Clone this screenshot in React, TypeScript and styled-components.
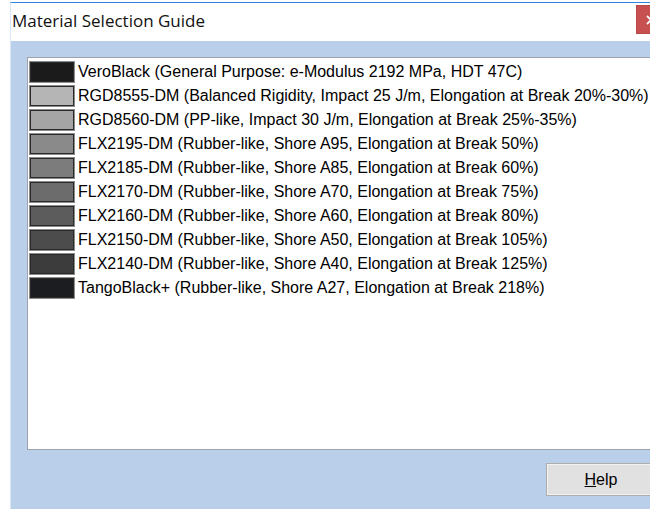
import React from "react";
import styled, { createGlobalStyle } from "styled-components";

interface Material {
    id: string;
    color: string;
    label: string;
}

const materials: Material[] = [
    { id: "vero", color: "#1b1b1b", label: "VeroBlack (General Purpose: e-Modulus 2192 MPa, HDT 47C)" },
    { id: "rgd8555", color: "#b5b5b5", label: "RGD8555-DM (Balanced Rigidity, Impact 25 J/m, Elongation at Break 20%-30%)" },
    { id: "rgd8560", color: "#a5a5a5", label: "RGD8560-DM (PP-like, Impact 30 J/m, Elongation at Break 25%-35%)" },
    { id: "flx2195", color: "#8a8a8a", label: "FLX2195-DM (Rubber-like, Shore A95, Elongation at Break 50%)" },
    { id: "flx2185", color: "#7c7c7c", label: "FLX2185-DM (Rubber-like, Shore A85, Elongation at Break 60%)" },
    { id: "flx2170", color: "#6c6c6c", label: "FLX2170-DM (Rubber-like, Shore A70, Elongation at Break 75%)" },
    { id: "flx2160", color: "#5c5c5c", label: "FLX2160-DM (Rubber-like, Shore A60, Elongation at Break 80%)" },
    { id: "flx2150", color: "#4c4c4c", label: "FLX2150-DM (Rubber-like, Shore A50, Elongation at Break 105%)" },
    { id: "flx2140", color: "#3c3c3c", label: "FLX2140-DM (Rubber-like, Shore A40, Elongation at Break 125%)" },
    { id: "tango", color: "#1c1d21", label: "TangoBlack+ (Rubber-like, Shore A27, Elongation at Break 218%)" },
];

const GlobalStyle = createGlobalStyle`
  html, body {
    margin: 0;
    padding: 0;
    background: #ffffff;
    overflow: hidden;
  }
`;

const App: React.FC = () => {
    return (
        <>
            <GlobalStyle />
            <Page>
                <Window>
                    <TitleBar>
                        <Title>Material Selection Guide</Title>
                        <CloseButton>
                            <svg width="10" height="10" viewBox="0 0 10 10">
                                <path d="M1 1 L9 9 M9 1 L1 9" stroke="#ffffff" strokeWidth="1.8" />
                            </svg>
                        </CloseButton>
                    </TitleBar>

                    <DialogBody>
                        <ListBox>
                            {materials.map((m) => (
                                <ListRow key={m.id}>
                                    <Swatch $color={m.color} />
                                    <RowLabel>{m.label}</RowLabel>
                                </ListRow>
                            ))}
                        </ListBox>

                        <ButtonRow>
                            <DialogButton>
                                <u>H</u>elp
                            </DialogButton>
                        </ButtonRow>
                    </DialogBody>
                </Window>
            </Page>
        </>
    );
};

export default App;

const Page = styled.div`
  height: 509px;
  padding: 2px 0 0 10px;
  box-sizing: border-box;
  overflow: hidden;
  background: #ffffff;
`;

const Window = styled.div`
  display: flex;
  flex-direction: column;
  width: 662px;
  height: 540px;
  box-sizing: border-box;
  border-top: 1px solid #2f84dc;
  border-left: 1px solid #d8e6f5;
`;

const TitleBar = styled.div`
  display: flex;
  flex-direction: row;
  align-items: flex-start;
  justify-content: space-between;
  height: 38px;
  background: #ffffff;
`;

const Title = styled.div`
  margin-top: 6px;
  padding-left: 1px;
  font-family: "Open Sans", "Noto Sans", sans-serif;
  font-size: 17px;
  color: #111111;
`;

const CloseButton = styled.div`
  display: flex;
  align-items: center;
  justify-content: center;
  margin-top: 2px;
  margin-right: 6px;
  width: 30px;
  height: 29px;
  box-sizing: border-box;
  border: 1px solid #b84a4a;
  background: #c75050;
`;

const DialogBody = styled.div`
  display: flex;
  flex-direction: column;
  flex: 1;
  padding: 16px 16px 0 16px;
  background: #b9cfea;
`;

const ListBox = styled.div`
  display: flex;
  flex-direction: column;
  height: 393px;
  box-sizing: border-box;
  padding: 2px 1px;
  background: #ffffff;
  border: 1px solid #9ea3aa;
  border-right-color: #dadada;
`;

const ListRow = styled.div`
  display: flex;
  flex-direction: row;
  align-items: center;
  height: 24px;
`;

const Swatch = styled.div<{ $color: string }>`
  width: 46px;
  height: 22px;
  box-sizing: border-box;
  border: 1px solid #8c8c8c;
  box-shadow: inset 0 0 0 1px #2a2a2a;
  background: ${(p) => p.$color};
  flex-shrink: 0;
`;

const RowLabel = styled.span`
  margin-left: 3px;
  font-family: "Liberation Sans", Arial, sans-serif;
  font-size: 16px;
  color: #000000;
  white-space: nowrap;
`;

const ButtonRow = styled.div`
  display: flex;
  flex-direction: row;
  justify-content: flex-end;
  margin-top: 13px;
`;

const DialogButton = styled.div`
  display: flex;
  align-items: center;
  justify-content: center;
  width: 110px;
  height: 33px;
  box-sizing: border-box;
  border: 1px solid #adadad;
  box-shadow: inset 0 0 0 1px #f2f2f2;
  background: #e1e1e1;
  font-family: "Liberation Sans", Arial, sans-serif;
  font-size: 16px;
  color: #000000;
`;
